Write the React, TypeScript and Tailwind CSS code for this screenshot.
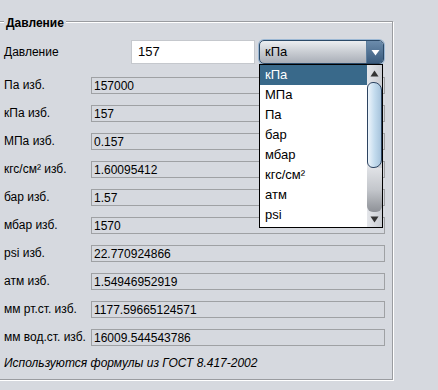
import React from "react";

const rows: [string, string][] = [
  ["Па изб.", "157000"],
  ["кПа изб.", "157"],
  ["МПа изб.", "0.157"],
  ["кгс/см² изб.", "1.60095412"],
  ["бар изб.", "1.57"],
  ["мбар изб.", "1570"],
  ["psi изб.", "22.770924866"],
  ["атм изб.", "1.54946952919"],
  ["мм рт.ст. изб.", "1177.59665124571"],
  ["мм вод.ст. изб.", "16009.544543786"],
];

const units = ["кПа", "МПа", "Па", "бар", "мбар", "кгс/см²", "атм", "psi"];

export default function App() {
  return (
    <div
      className="w-[438px] h-[390px] bg-[#d6d9df] overflow-hidden relative text-[12px] text-black"
      style={{ fontFamily: '"Liberation Sans", Arial, sans-serif' }}
    >
      <div className="relative mt-[21px] ml-[-2px] w-[395px] h-[359px] border-t border-r border-b border-[#9a9ca0] shadow-[1px_1px_0_#ffffff,inset_0_1px_0_#ffffff]">
        <div className="absolute left-[6px] top-[-6px] px-[2px] bg-[#d6d9df] font-bold leading-[15px] text-[12px]">
          Давление
        </div>
        <div className="flex flex-col pl-[6px] pt-[18px]">
          <div className="flex items-center h-[24px]">
            <div className="w-[127px] leading-[15px]">Давление</div>
            <div className="w-[124px] h-[24px] bg-white border border-[#c5c8cd] flex items-center pl-[6px] text-[13px]">
              157
            </div>
            <div className="ml-[4px] w-[125px] h-[24px] rounded-[5px] border border-[#2c4a68] shadow-[0_0_0_1px_#9cb8d4] bg-gradient-to-b from-[#eceef1] via-[#c9cdd3] to-[#a9aeb7] flex overflow-hidden">
              <div className="flex-1 flex items-center pl-[5px] text-[13px]">кПа</div>
              <div className="w-[17px] h-full bg-gradient-to-b from-[#6c8cac] to-[#3b5c7e] flex items-center justify-center border-l border-[#5d7e9e]">
                <svg width="9" height="7" viewBox="0 0 9 7">
                  <path d="M0.5 1 L8.5 1 L4.5 6.5 Z" fill="#ffffff" />
                </svg>
              </div>
            </div>
          </div>
          <div className="flex flex-col gap-[11px] mt-[13px]">
            {rows.map(([label, value]) => (
              <div key={label} className="flex items-center h-[17px]">
                <div className="w-[87px] shrink-0 leading-[15px] whitespace-nowrap">{label}</div>
                <div className="w-[294px] h-[17px] border border-[#9fa1a4] flex items-center pl-[2px] text-[12px]">
                  {value}
                </div>
              </div>
            ))}
          </div>
          <div className="mt-[10px] italic leading-[15px]">Используются формулы из ГОСТ 8.417-2002</div>
        </div>
      </div>

      <div className="absolute left-[259px] top-[64px] w-[124px] h-[164px] border border-black bg-white flex">
        <div className="flex-1 flex flex-col">
          {units.map((u, i) => (
            <div
              key={u}
              className={
                i === 0
                  ? "h-[20px] flex items-center pl-[5px] text-[13px] bg-[#39698a] text-white"
                  : "h-[20px] flex items-center pl-[5px] text-[13px]"
              }
            >
              {u}
            </div>
          ))}
        </div>
        <div className="w-[15px] flex flex-col bg-gradient-to-r from-[#e4e6ea] to-[#c9ccd2]">
          <div className="h-[17px] flex items-center justify-center">
            <svg width="9" height="7" viewBox="0 0 9 7">
              <path d="M0.5 6.5 L8.5 6.5 L4.5 0.5 Z" fill="#333333" />
            </svg>
          </div>
          <div className="h-[86px] rounded-r-[8px] rounded-l-[6px] border border-[#2d4461] bg-gradient-to-r from-[#eef5fb] via-[#c4dcee] to-[#a7c4dc]" />
          <div className="flex-1 bg-gradient-to-b from-[#e0e2e6] via-[#c3c6cb] to-[#8e9197] rounded-b-[6px]" />
          <div className="h-[15px] flex items-center justify-center">
            <svg width="9" height="7" viewBox="0 0 9 7">
              <path d="M0.5 0.5 L8.5 0.5 L4.5 6.5 Z" fill="#333333" />
            </svg>
          </div>
        </div>
      </div>
    </div>
  );
}
